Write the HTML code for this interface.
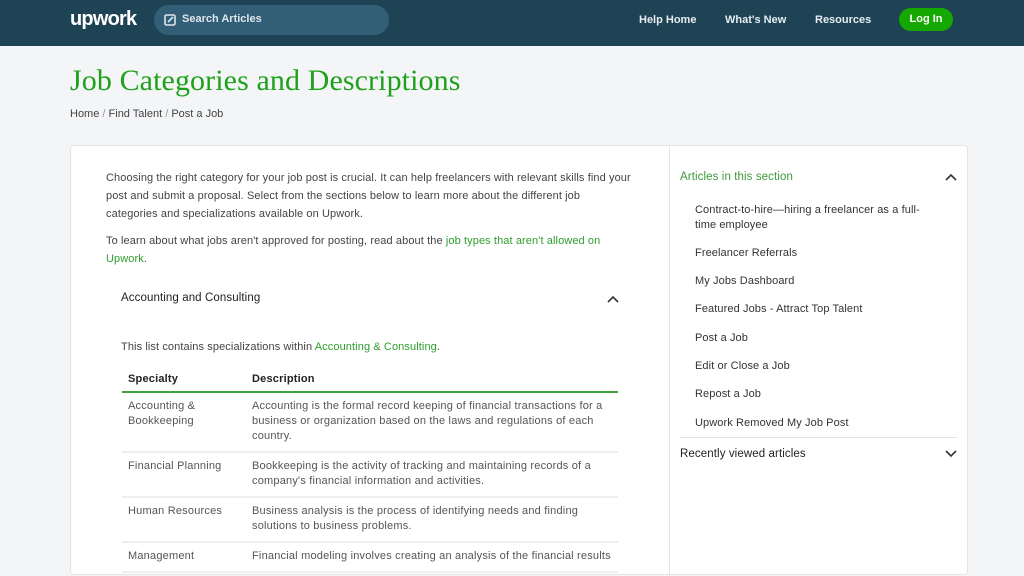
<!DOCTYPE html>
<html><head><meta charset="utf-8"><style>
*{margin:0;padding:0;box-sizing:border-box}
body{width:1024px;height:562px;overflow:hidden;background:#f4f5f7;font-family:"Liberation Sans",sans-serif;color:#333}
.hdr{position:absolute;left:0;top:0;width:1024px;height:46px;background:#1e4355}
.logo{position:absolute;left:70px;top:8px;color:#fff;font-size:20px;font-weight:bold;letter-spacing:-0.8px}
.search{position:absolute;left:154px;top:5px;width:235px;height:30px;border-radius:15px;background:#325f77;color:#dde6ea;font-size:11px;font-weight:bold;padding:8px 0 0 28px}
.search svg{position:absolute;left:10px;top:9px}
.nav{position:absolute;top:14px;color:#e6edf0;font-size:11px;font-weight:bold}
.login{position:absolute;left:899px;top:8px;width:54px;height:23px;border-radius:12px;background:#14a800;color:#fff;font-size:11px;font-weight:bold;text-align:center;line-height:23px}
h1{position:absolute;left:70px;top:64px;font-family:"Liberation Serif",serif;font-weight:normal;color:#1ea11b;font-size:30px;letter-spacing:0.1px}
.bc{position:absolute;left:70px;top:108px;font-size:11px;color:#444}
.bc span{color:#999}
.card{position:absolute;left:70px;top:145px;width:898px;height:430px;background:#fff;border:1px solid #e2e4e7;border-radius:4px;letter-spacing:0.1px}
.div{position:absolute;left:598px;top:0;width:1px;height:430px;background:#e2e4e7}
p{font-size:11px;line-height:18px;color:#444}
a{color:#2e9e2c;text-decoration:none}
table{border-collapse:collapse;font-size:11px;color:#555;position:absolute;left:51px;top:222px;width:496px;letter-spacing:0.2px}
th{text-align:left;color:#222;padding:5px 6px 6px;border-bottom:2px solid #3ea33a;font-weight:bold}
td{vertical-align:top;padding:6px 6px 7px;line-height:15px;border-bottom:2px solid #eee}
.side{position:absolute;font-size:11px;color:#333}
</style></head><body>
<div class="hdr">
<div class="logo">upwork</div>
<div class="search"><svg width="12" height="12" viewBox="0 0 12 12"><rect x="1" y="1" width="10" height="10" rx="1.5" fill="none" stroke="#dde6ea" stroke-width="1.6"/><path d="M4 8l5-5" stroke="#dde6ea" stroke-width="1.6"/></svg>Search Articles</div>
<div class="nav" style="left:639px">Help Home</div>
<div class="nav" style="left:725px">What's New</div>
<div class="nav" style="left:815px">Resources</div>
<div class="login">Log In</div>
</div>
<h1>Job Categories and Descriptions</h1>
<div class="bc">Home <span>/</span> Find Talent <span>/</span> Post a Job</div>
<div class="card">
<div class="div"></div>
<p style="position:absolute;left:35px;top:23px;width:527px">Choosing the right category for your job post is crucial. It can help freelancers with relevant skills find your post and submit a proposal. Select from the sections below to learn more about the different job categories and specializations available on Upwork.</p>
<p style="position:absolute;left:35px;top:86px;width:527px">To learn about what jobs aren't approved for posting, read about the <a>job types that aren't allowed on Upwork</a>.</p>
<div style="position:absolute;left:50px;top:146px;font-size:11.5px;color:#222">Accounting and Consulting</div>
<svg style="position:absolute;left:536px;top:149px" width="12" height="8" viewBox="0 0 12 8"><path d="M1 7l5-5 5 5" fill="none" stroke="#333" stroke-width="1.6"/></svg>
<p style="position:absolute;left:50px;top:192px">This list contains specializations within <a>Accounting &amp; Consulting</a>.</p>
<table>
<tr><th style="width:124px">Specialty</th><th>Description</th></tr>
<tr><td>Accounting &amp;<br>Bookkeeping</td><td>Accounting is the formal record keeping of financial transactions for a business or organization based on the laws and regulations of each country.</td></tr>
<tr><td>Financial Planning</td><td>Bookkeeping is the activity of tracking and maintaining records of a company's financial information and activities.</td></tr>
<tr><td>Human Resources</td><td>Business analysis is the process of identifying needs and finding solutions to business problems.</td></tr>
<tr><td>Management</td><td>Financial modeling involves creating an analysis of the financial results</td></tr>
</table>
<div class="side" style="left:609px;top:25px;color:#3c9a39;font-size:11.5px">Articles in this section</div>
<svg style="position:absolute;left:874px;top:27px" width="12" height="8" viewBox="0 0 12 8"><path d="M1 7l5-5 5 5" fill="none" stroke="#333" stroke-width="1.6"/></svg>
<div class="side" style="left:624px;top:57px;line-height:15px;width:240px">Contract-to-hire—hiring a freelancer as a full-time employee</div>
<div class="side" style="left:624px;top:101px">Freelancer Referrals</div>
<div class="side" style="left:624px;top:129px">My Jobs Dashboard</div>
<div class="side" style="left:624px;top:157px">Featured Jobs - Attract Top Talent</div>
<div class="side" style="left:624px;top:186px">Post a Job</div>
<div class="side" style="left:624px;top:214px">Edit or Close a Job</div>
<div class="side" style="left:624px;top:242px">Repost a Job</div>
<div class="side" style="left:624px;top:271px">Upwork Removed My Job Post</div>
<div style="position:absolute;left:609px;top:291px;width:277px;height:1px;background:#e2e4e7"></div>
<div class="side" style="left:609px;top:302px;font-size:11.5px;color:#222">Recently viewed articles</div>
<svg style="position:absolute;left:874px;top:304px" width="12" height="8" viewBox="0 0 12 8"><path d="M1 1l5 5 5-5" fill="none" stroke="#333" stroke-width="1.6"/></svg>
</div>
</body></html>
